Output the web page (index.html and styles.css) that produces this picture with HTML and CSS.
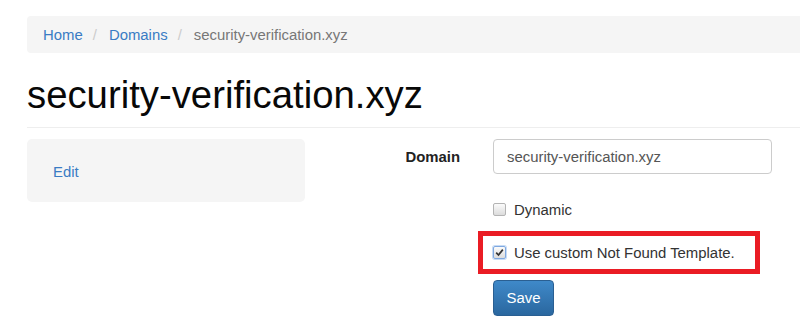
FILE: index.html
```html
<!DOCTYPE html>
<html lang="en">
<head>
  <meta charset="UTF-8"/>
  <title>security-verification.xyz</title>
  <link rel="stylesheet" href="styles.css">
</head>
<body>
  <div class="page">
    <ol class="breadcrumb">
      <li><a href="#">Home</a></li>
      <li><a href="#">Domains</a></li>
      <li class="active">security-verification.xyz</li>
    </ol>

    <h1>security-verification.xyz</h1>
    <hr>

    <div class="content">
      <div class="well">
        <a href="#">Edit</a>
      </div>

      <form class="domain-form">
        <label class="field-label" for="domain">Domain</label>
        <input class="field-input" id="domain" type="text" value="security-verification.xyz">

        <div class="field-rest">
          <label class="check">
            <span class="box"></span>
            Dynamic
          </label>

          <label class="check highlight">
            <span class="box checked">
              <svg width="9" height="9" viewBox="0 0 9 9"><path d="M1.2 4.6 L3.5 7 L7.8 1.6" fill="none" stroke="#333" stroke-width="1.7"/></svg>
            </span>
            Use custom Not Found Template.
          </label>

          <button type="button" class="btn-save">Save</button>
        </div>
      </form>
    </div>
  </div>
</body>
</html>
```

FILE: styles.css
```css
* {
  box-sizing: border-box;
}

body {
  margin: 0;
  overflow: hidden;
  font-family: 'Liberation Sans', Arial, sans-serif;
  font-size: 14.9px;
  line-height: 21px;
  color: #333;
  background: #fff;
}

a {
  color: #3a7cc4;
  text-decoration: none;
}

.page {
  width: 840px;
  padding: 16px 0 0 27px;
}

.breadcrumb {
  display: flex;
  list-style: none;
  margin: 0;
  padding: 8.5px 16px 7.5px;
  background: #f5f5f5;
  border-radius: 4px;
}

.breadcrumb li + li::before {
  content: "/";
  padding: 0 12px 0 10px;
  color: #ccc;
}

.breadcrumb .active {
  color: #777;
}

h1 {
  margin: 21px 0 0;
  font-size: 38.3px;
  line-height: 42px;
  font-weight: normal;
  color: #080808;
}

hr {
  margin: 11px 0;
  border: 0;
  border-top: 1px solid #eee;
}

.content {
  display: flex;
  align-items: flex-start;
}

.well {
  width: 278px;
  padding: 23px 26px 19px;
  background: #f5f5f5;
  border-radius: 5px;
}

.domain-form {
  display: grid;
  grid-template-columns: 155px 279px;
  column-gap: 33px;
  align-items: center;
}

.field-label {
  padding-top: 2px;
  text-align: right;
  font-weight: bold;
  color: #222;
}

.field-input {
  height: 35px;
  padding: 0 13px;
  font: inherit;
  color: #555;
  border: 1px solid #ccc;
  border-radius: 4px;
}

.field-rest {
  grid-column: 2;
  display: flex;
  flex-direction: column;
  align-items: flex-start;
  padding-top: 26px;
}

.check {
  display: flex;
  align-items: center;
  gap: 8px;
  color: #333;
}

.box {
  display: flex;
  align-items: center;
  justify-content: center;
  width: 13px;
  height: 13px;
  margin-top: -2px;
  border: 1px solid #b4b4b4;
  border-radius: 2px;
  background: linear-gradient(#fbfbfb, #dcdcdc);
}

.box.checked {
  border-color: #7fa8e0;
  box-shadow: 0 0 0 1px #c6dbf5;
}

.highlight {
  width: 282px;
  margin: 10px 0 0 -15px;
  padding: 7px 10px 5px;
  border: 5px solid #ea1c24;
}

.btn-save {
  margin-top: 6px;
  width: 61px;
  height: 36px;
  padding: 0;
  font: inherit;
  color: #fff;
  background: linear-gradient(#3f89c9, #2a679f);
  border: 1px solid #2a5f92;
  border-radius: 4px;
  cursor: pointer;
}
```
